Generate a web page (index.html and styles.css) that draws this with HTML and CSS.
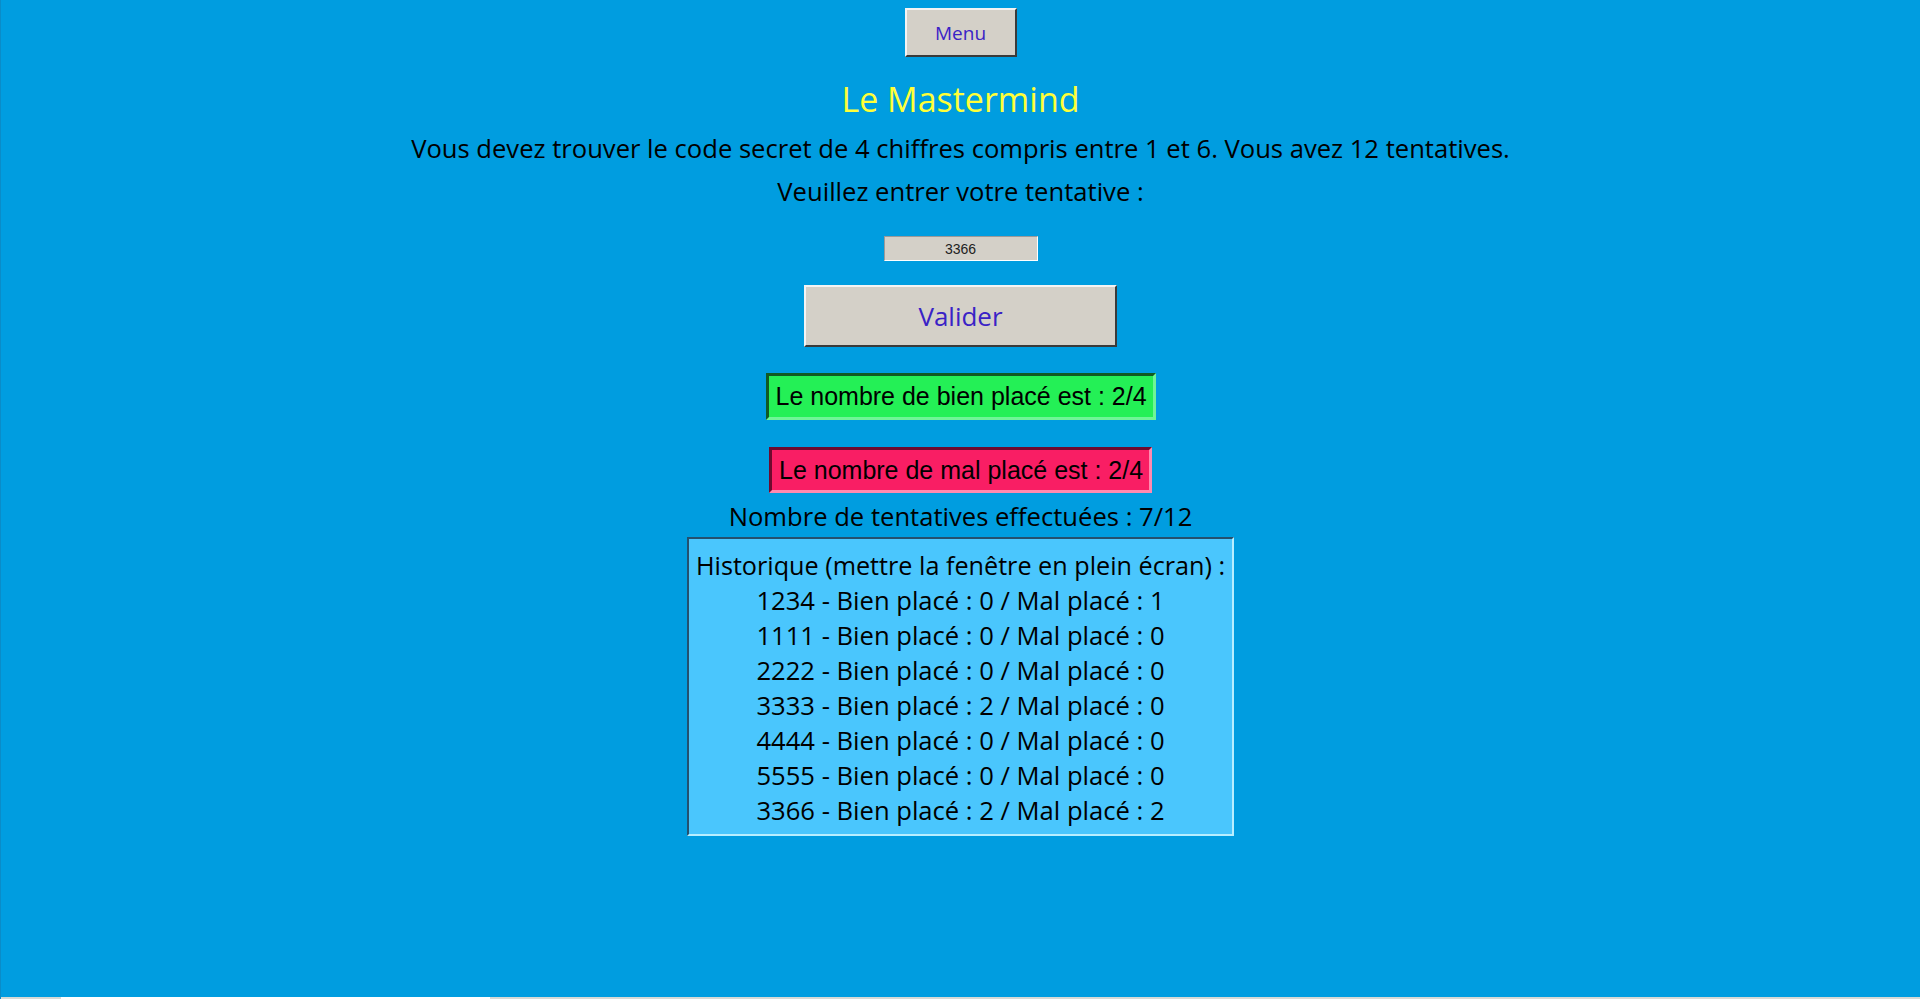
FILE: index.html
```html
<!DOCTYPE html>
<html lang="fr">
<head>
<meta charset="utf-8">
<title>Le Mastermind</title>
<link rel="stylesheet" href="styles.css">
</head>
<body>
<main class="page">
  <button class="btn btn-menu" type="button">Menu</button>
  <h1 class="title">Le Mastermind</h1>
  <p class="text line-intro">Vous devez trouver le code secret de 4 chiffres compris entre 1 et 6. Vous avez 12 tentatives.</p>
  <p class="text line-prompt">Veuillez entrer votre tentative :</p>
  <input class="guess" type="text" value="3366">
  <button class="btn btn-valider" type="button">Valider</button>
  <div class="result result-good">Le nombre de bien placé est : 2/4</div>
  <div class="result result-bad">Le nombre de mal placé est : 2/4</div>
  <p class="text line-count">Nombre de tentatives effectuées : 7/12</p>
  <div class="history">
    <div class="history-line history-heading">Historique (mettre la fenêtre en plein écran) :</div>
    <div class="history-line">1234 - Bien placé : 0 / Mal placé : 1</div>
    <div class="history-line">1111 - Bien placé : 0 / Mal placé : 0</div>
    <div class="history-line">2222 - Bien placé : 0 / Mal placé : 0</div>
    <div class="history-line">3333 - Bien placé : 2 / Mal placé : 0</div>
    <div class="history-line">4444 - Bien placé : 0 / Mal placé : 0</div>
    <div class="history-line">5555 - Bien placé : 0 / Mal placé : 0</div>
    <div class="history-line">3366 - Bien placé : 2 / Mal placé : 2</div>
  </div>
</main>
<footer class="bottom-strip"><span class="bottom-strip-tab"></span></footer>
</body>
</html>
```
FILE: styles.css
```css
html, body {
  margin: 0;
  padding: 0;
}

body {
  min-height: 100vh;
  display: flex;
  flex-direction: column;
  background: #009de0;
  font-family: "Comic Sans MS", "Open Sans", sans-serif;
  color: #000;
  border-left: 1px solid #0a8cc8;
  box-sizing: border-box;
}

.page {
  flex: 1;
  display: flex;
  flex-direction: column;
  align-items: center;
  padding-top: 8px;
}

.btn {
  font-family: "Comic Sans MS", "Open Sans", sans-serif;
  background: #d4d0c8;
  color: #3a22c6;
  border-style: solid;
  border-width: 2px;
  border-color: #f4f4f4 #3a3a3a #3a3a3a #f4f4f4;
  box-sizing: border-box;
  padding: 0;
  margin: 0;
  cursor: pointer;
}

.btn-menu {
  width: 112px;
  height: 49px;
  font-size: 19px;
  font-weight: 500;
}

.title {
  margin: 21px 0 0;
  font-size: 34px;
  line-height: 42px;
  font-weight: normal;
  color: #ffff38;
}

.text {
  margin: 0;
  font-size: 25.6px;
  line-height: 35px;
  white-space: nowrap;
}

.line-intro {
  margin-top: 11px;
}

.line-prompt {
  margin-top: 8px;
}

.guess {
  margin-top: 27px;
  width: 154px;
  height: 25px;
  box-sizing: border-box;
  border-style: solid;
  border-width: 1px;
  border-color: #9a9a9a #ffffff #ffffff #9a9a9a;
  background: #d4d0c8;
  font-family: "Liberation Sans", Arial, sans-serif;
  font-size: 14px;
  color: #222;
  text-align: center;
  padding: 0;
}

.btn-valider {
  margin-top: 24px;
  width: 313px;
  height: 62px;
  font-size: 26px;
}

.result {
  box-sizing: border-box;
  font-family: "Liberation Sans", Arial, sans-serif;
  font-size: 25px;
  line-height: 29px;
  border-style: solid;
  border-width: 3px;
  padding: 6px 7px 6px 7px;
  white-space: nowrap;
}

.result-good {
  margin-top: 26px;
  width: 390px;
  height: 47px;
  background: #24f056;
  border-color: #115a22 #6ff596 #6ff596 #115a22;
}

.result-bad {
  margin-top: 27px;
  width: 383px;
  height: 46px;
  background: #f91e64;
  border-color: #6e0a2e #ff8ab0 #ff8ab0 #6e0a2e;
}

.line-count {
  margin-top: 6px;
}

.history {
  margin-top: 3px;
  width: 547px;
  height: 299px;
  box-sizing: border-box;
  background: #4ac6fd;
  border-style: solid;
  border-width: 2px;
  border-color: #24506e #b8eeff #b8eeff #24506e;
  padding: 9px 0 5px;
  display: flex;
  flex-direction: column;
  align-items: center;
}

.history-line {
  font-size: 25.6px;
  line-height: 35px;
  white-space: nowrap;
}

.history-heading {
  font-size: 25.2px;
}

.bottom-strip {
  height: 2px;
  background: #d6dad6;
  display: flex;
}

.bottom-strip-tab {
  margin-left: 60px;
  width: 429px;
  background: #ffffff;
}
```
